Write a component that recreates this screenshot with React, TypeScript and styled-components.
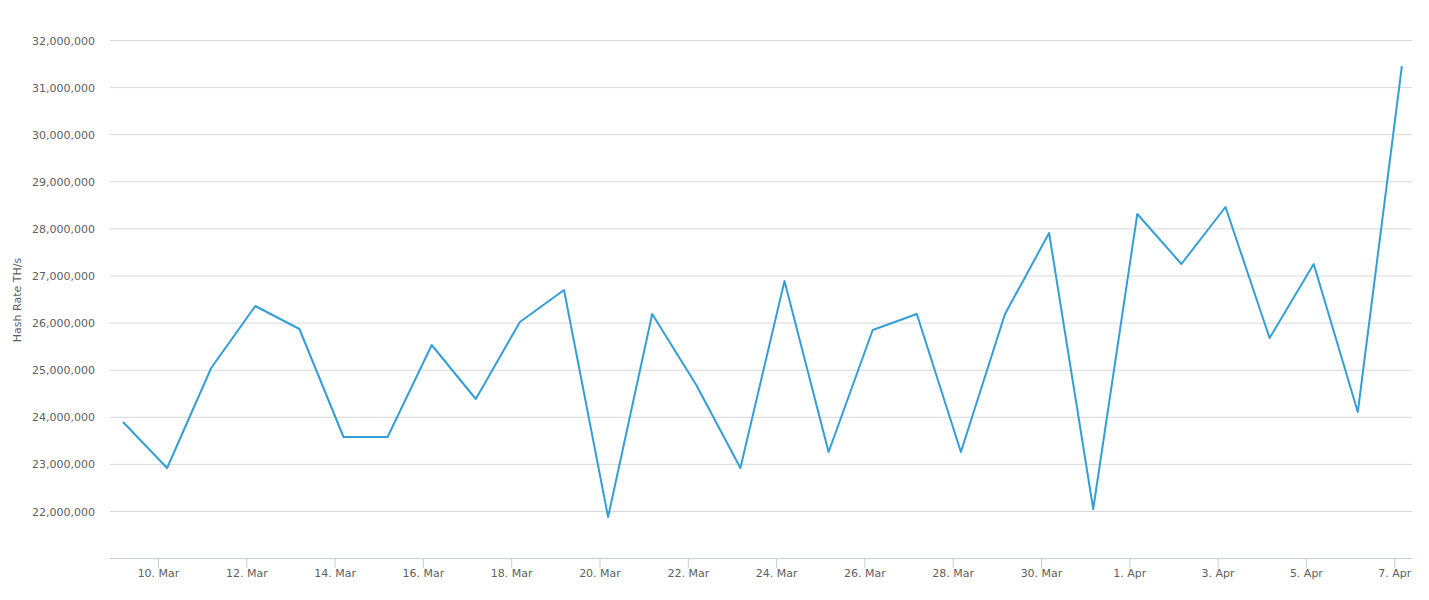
import React from "react";
import styled, { createGlobalStyle } from "styled-components";

const Global = createGlobalStyle`
  html, body { margin: 0; padding: 0; background: #fff; }
`;

const Wrap = styled.div`
  width: 1429px;
  height: 600px;
  overflow: hidden;
  font-family: "DejaVu Sans", "Liberation Sans", sans-serif;
`;

const Label = styled.text<{ $anchor: string }>`
  font-size: 11px;
  fill: #606060;
  text-anchor: ${(p) => p.$anchor};
`;

const ys = [422, 468, 368, 306, 329, 437, 437, 345, 399, 322, 290, 517, 314, 385, 468, 281, 452, 330, 314, 452, 314, 233, 509, 214, 264, 207, 338, 264, 412, 66];
const gridVals = ["32,000,000","31,000,000","30,000,000","29,000,000","28,000,000","27,000,000","26,000,000","25,000,000","24,000,000","23,000,000","22,000,000"];
const xLabels = ["10. Mar","12. Mar","14. Mar","16. Mar","18. Mar","20. Mar","22. Mar","24. Mar","26. Mar","28. Mar","30. Mar","1. Apr","3. Apr","5. Apr","7. Apr"];

export default function App() {
  const pts = ys.map((y, i) => `${123 + i * 44.1},${y}`).join(" ");
  return (
    <Wrap>
      <Global />
      <svg width="1429" height="600">
        {gridVals.map((v, i) => {
          const y = 40.5 + i * 47.1;
          return (
            <g key={v}>
              <line x1="110" x2="1412" y1={y} y2={y} stroke="#d8d8d8" strokeWidth="1" />
              <Label $anchor="end" x="95" y={y + 4}>{v}</Label>
            </g>
          );
        })}
        <line x1="110" x2="1412" y1="558.5" y2="558.5" stroke="#c0d0e0" />
        {xLabels.map((l, i) => {
          const x = 158.5 + i * 88.3;
          return (
            <g key={l}>
              <line x1={x} x2={x} y1="558" y2="568" stroke="#c0d0e0" />
              <Label $anchor="middle" x={x} y="577">{l}</Label>
            </g>
          );
        })}
        <Label $anchor="middle" x="0" y="0" transform="translate(21,300) rotate(-90)">Hash Rate TH/s</Label>
        <polyline points={pts} fill="none" stroke="#339fd6" strokeWidth="2" strokeLinejoin="round" />
      </svg>
    </Wrap>
  );
}
